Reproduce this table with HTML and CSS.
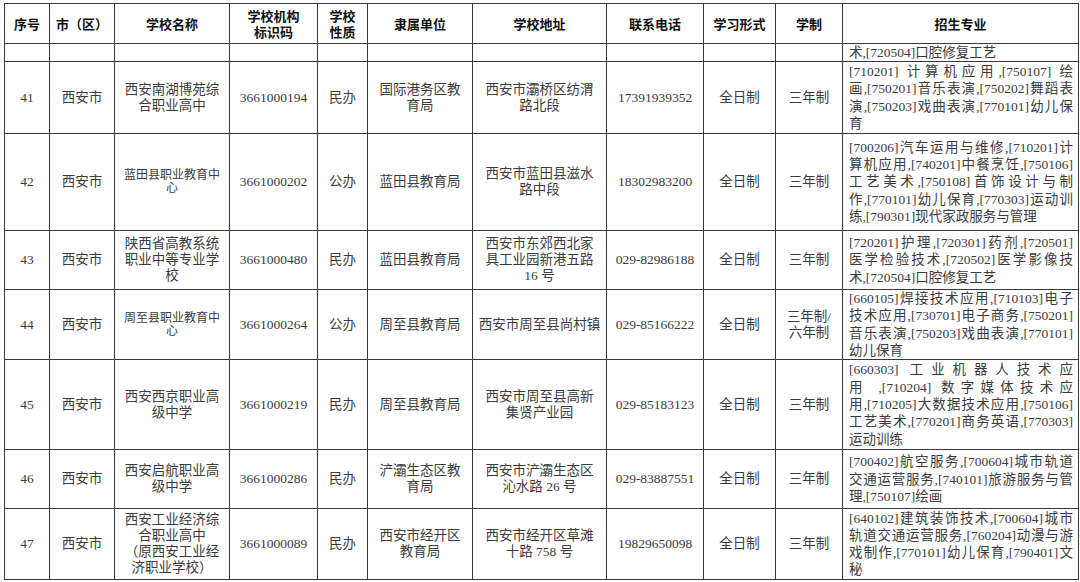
FILE: index.html
```html
<!DOCTYPE html>
<html lang="zh-CN">
<head>
<meta charset="utf-8">
<title>招生学校</title>
<link rel="stylesheet" href="styles.css">
</head>
<body>
<table class="tbl">
  <colgroup>
    <col class="c1"><col class="c2"><col class="c3"><col class="c4"><col class="c5"><col class="c6"><col class="c7"><col class="c8"><col class="c9"><col class="c10"><col class="c11">
  </colgroup>
  <thead>
    <tr class="h-head">
      <th>序号</th><th>市（区）</th><th>学校名称</th><th>学校机构<br>标识码</th><th>学校<br>性质</th><th>隶属单位</th><th>学校地址</th><th>联系电话</th><th>学习形式</th><th>学制</th><th>招生专业</th>
    </tr>
  </thead>
  <tbody>
    <tr class="h-cont">
      <td></td><td></td><td></td><td></td><td></td><td></td><td></td><td></td><td></td><td></td>
      <td class="maj cont"><span class="ln end">术,[720504]口腔修复工艺</span></td>
    </tr>
    <tr class="h41">
      <td>41</td><td>西安市</td><td>西安南湖博苑综<br>合职业高中</td><td>3661000194</td><td>民办</td><td>国际港务区教<br>育局</td><td>西安市灞桥区纺渭<br>路北段</td><td>17391939352</td><td>全日制</td><td>三年制</td>
      <td class="maj"><span class="ln">[710201] 计算机应用,[750107] 绘</span><span class="ln">画,[750201]音乐表演,[750202]舞蹈表</span><span class="ln">演,[750203]戏曲表演,[770101]幼儿保</span><span class="ln end">育</span></td>
    </tr>
    <tr class="h42">
      <td>42</td><td>西安市</td><td class="tight">蓝田县职业教育中<br>心</td><td>3661000202</td><td>公办</td><td>蓝田县教育局</td><td>西安市蓝田县滋水<br>路中段</td><td>18302983200</td><td>全日制</td><td>三年制</td>
      <td class="maj"><span class="ln">[700206]汽车运用与维修,[710201]计</span><span class="ln">算机应用,[740201]中餐烹饪,[750106]</span><span class="ln">工艺美术,[750108]首饰设计与制</span><span class="ln">作,[770101]幼儿保育,[770303]运动训</span><span class="ln end">练,[790301]现代家政服务与管理</span></td>
    </tr>
    <tr class="h43">
      <td>43</td><td>西安市</td><td>陕西省高教系统<br>职业中等专业学<br>校</td><td>3661000480</td><td>民办</td><td>蓝田县教育局</td><td>西安市东郊西北家<br>具工业园新港五路<br>16 号</td><td>029-82986188</td><td>全日制</td><td>三年制</td>
      <td class="maj"><span class="ln">[720201]护理,[720301]药剂,[720501]</span><span class="ln">医学检验技术,[720502]医学影像技</span><span class="ln end">术,[720504]口腔修复工艺</span></td>
    </tr>
    <tr class="h44">
      <td>44</td><td>西安市</td><td class="tight">周至县职业教育中<br>心</td><td>3661000264</td><td>公办</td><td>周至县教育局</td><td>西安市周至县尚村镇</td><td>029-85166222</td><td>全日制</td><td>三年制/<br>六年制</td>
      <td class="maj"><span class="ln">[660105]焊接技术应用,[710103]电子</span><span class="ln">技术应用,[730701]电子商务,[750201]</span><span class="ln">音乐表演,[750203]戏曲表演,[770101]</span><span class="ln end">幼儿保育</span></td>
    </tr>
    <tr class="h45">
      <td>45</td><td>西安市</td><td>西安西京职业高<br>级中学</td><td>3661000219</td><td>民办</td><td>周至县教育局</td><td>西安市周至县高新<br>集贤产业园</td><td>029-85183123</td><td>全日制</td><td>三年制</td>
      <td class="maj"><div class="clip"><span class="ln">[660303] 工业机器人技术应</span><span class="ln">用 ,[710204] 数字媒体技术应</span><span class="ln">用,[710205]大数据技术应用,[750106]</span><span class="ln">工艺美术,[770201]商务英语,[770303]</span><span class="ln end">运动训练</span></div></td>
    </tr>
    <tr class="h46">
      <td>46</td><td>西安市</td><td>西安启航职业高<br>级中学</td><td>3661000286</td><td>民办</td><td>浐灞生态区教<br>育局</td><td>西安市浐灞生态区<br>沁水路 26 号</td><td>029-83887551</td><td>全日制</td><td>三年制</td>
      <td class="maj"><span class="ln">[700402]航空服务,[700604]城市轨道</span><span class="ln">交通运营服务,[740101]旅游服务与管</span><span class="ln end">理,[750107]绘画</span></td>
    </tr>
    <tr class="h47">
      <td>47</td><td>西安市</td><td>西安工业经济综<br>合职业高中<br>（原西安工业经<br>济职业学校）</td><td>3661000089</td><td>民办</td><td>西安市经开区<br>教育局</td><td>西安市经开区草滩<br>十路 758 号</td><td>19829650098</td><td>全日制</td><td>三年制</td>
      <td class="maj"><span class="ln">[640102]建筑装饰技术,[700604]城市</span><span class="ln">轨道交通运营服务,[760204]动漫与游</span><span class="ln">戏制作,[770101]幼儿保育,[790401]文</span><span class="ln end">秘</span></td>
    </tr>
  </tbody>
</table>
</body>
</html>
```

FILE: styles.css
```css
html, body {
  margin: 0;
  padding: 0;
  background: #ffffff;
}

body {
  padding: 3px 0 0 4px;
}

.tbl {
  border-collapse: collapse;
  table-layout: fixed;
  width: 1075px;
  font-family: "Liberation Serif", "Noto Sans CJK SC", serif;
  font-size: 13.5px;
  color: #3c3c3c;
}

.c1 { width: 45px; }
.c2 { width: 65px; }
.c3 { width: 115px; }
.c4 { width: 88px; }
.c5 { width: 50px; }
.c6 { width: 105px; }
.c7 { width: 134px; }
.c8 { width: 97px; }
.c9 { width: 72px; }
.c10 { width: 67px; }
.c11 { width: 236px; }

.tbl th,
.tbl td {
  border: 1px solid #3a3a3a;
  padding: 0 4px;
  text-align: center;
  vertical-align: middle;
  line-height: 16px;
  overflow: hidden;
}

.tbl th {
  font-family: "Noto Sans CJK SC", sans-serif;
  font-weight: 700;
  font-size: 13px;
  color: #111111;
  line-height: 16px;
}

.h-head { height: 40px; }
.h-cont { height: 18px; }
.h41 { height: 72px; }
.h42 { height: 97px; }
.h43 { height: 59px; }
.h44 { height: 70px; }
.h45 { height: 90px; }
.h46 { height: 59px; }
.h47 { height: 71px; }

.tbl td.tight {
  font-size: 12px;
  line-height: 13px;
}

.tbl td.maj {
  text-align: left;
  padding: 0 5px 0 6px;
  line-height: 17.3px;
}

.tbl td.maj.cont {
  line-height: 15px;
}

.ln {
  display: block;
  text-align: justify;
  text-align-last: justify;
}

.ln.end {
  text-align: left;
  text-align-last: left;
}

.clip {
  max-height: 87px;
  overflow: hidden;
}
```
